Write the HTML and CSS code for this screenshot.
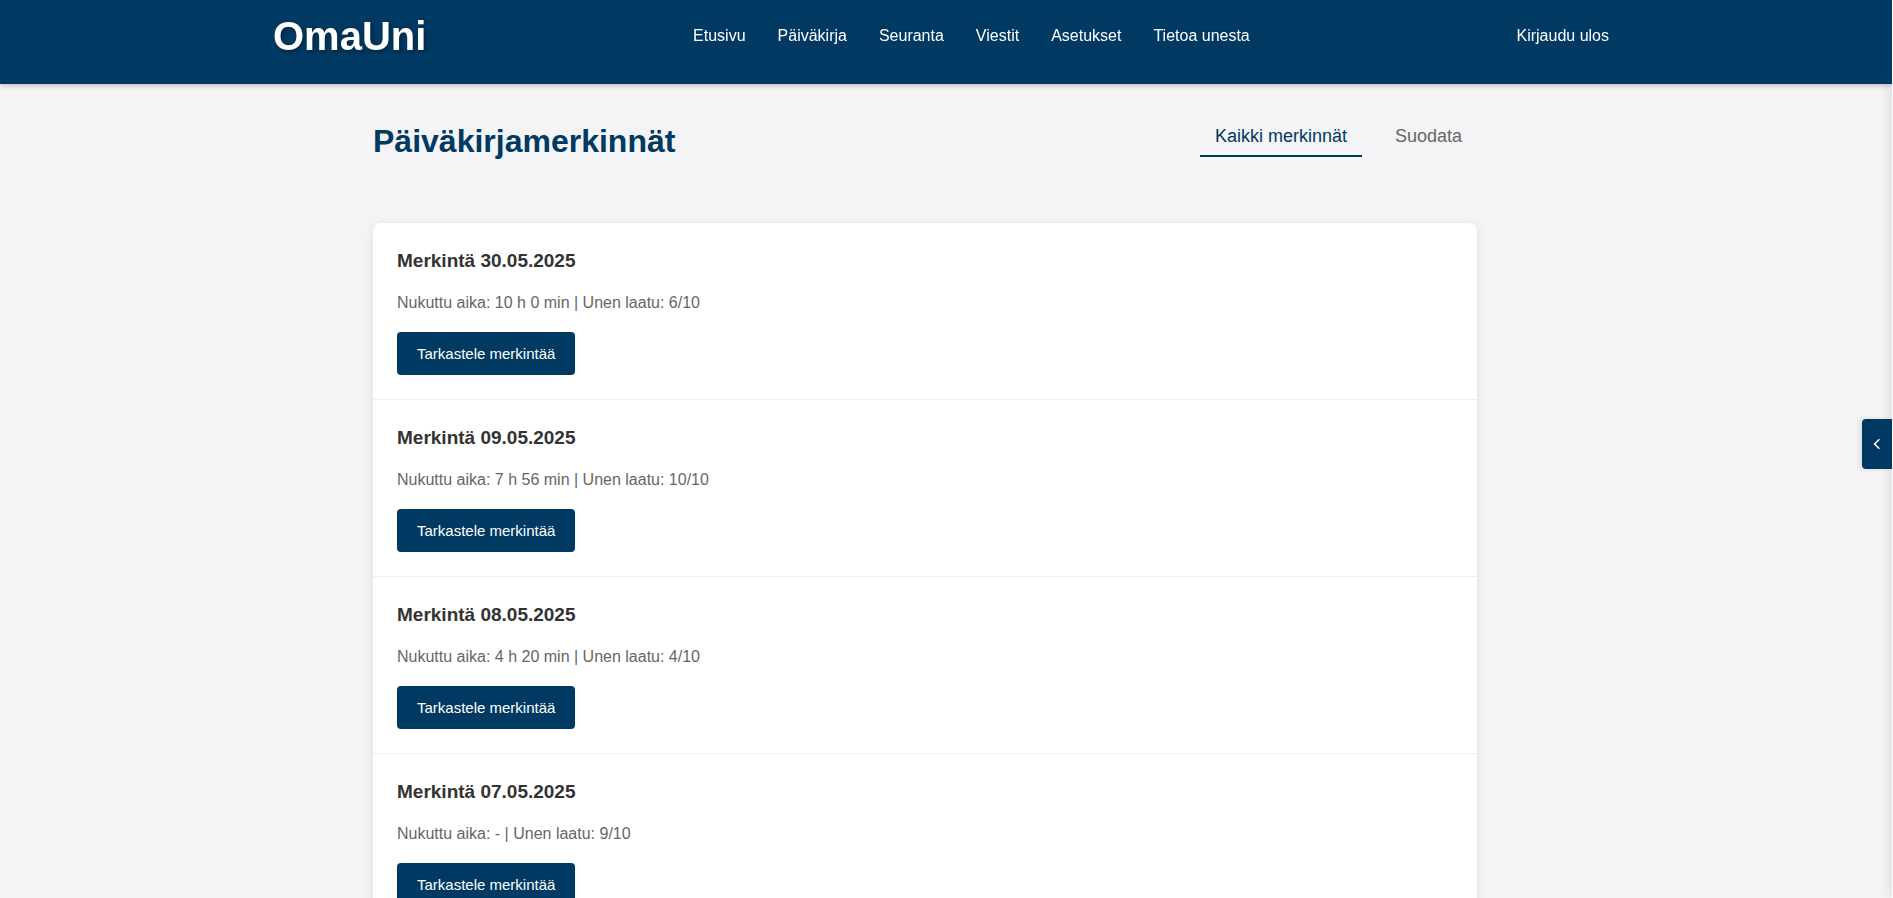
FILE: index.html
```
<!DOCTYPE html>
<html lang="fi">
<head>
<meta charset="utf-8">
<title>OmaUni – Päiväkirjamerkinnät</title>
<link rel="stylesheet" href="styles.css">
</head>
<body>
<header class="site-header">
  <div class="header-inner">
    <a class="logo" href="#">OmaUni</a>
    <nav class="main-nav" aria-label="Päävalikko">
      <a href="#">Etusivu</a>
      <a href="#">Päiväkirja</a>
      <a href="#">Seuranta</a>
      <a href="#">Viestit</a>
      <a href="#">Asetukset</a>
      <a href="#">Tietoa unesta</a>
    </nav>
    <a class="logout" href="#">Kirjaudu ulos</a>
  </div>
</header>
<main class="content">
  <div class="page-head">
    <h1>Päiväkirjamerkinnät</h1>
    <div class="tabs">
      <button class="tab active" type="button">Kaikki merkinnät</button>
      <button class="tab" type="button">Suodata</button>
    </div>
  </div>
  <section class="entries">
    <article class="entry">
      <h2>Merkintä 30.05.2025</h2>
      <p>Nukuttu aika: 10 h 0 min | Unen laatu: 6/10</p>
      <button class="view-btn" type="button">Tarkastele merkintää</button>
    </article>
    <article class="entry">
      <h2>Merkintä 09.05.2025</h2>
      <p>Nukuttu aika: 7 h 56 min | Unen laatu: 10/10</p>
      <button class="view-btn" type="button">Tarkastele merkintää</button>
    </article>
    <article class="entry">
      <h2>Merkintä 08.05.2025</h2>
      <p>Nukuttu aika: 4 h 20 min | Unen laatu: 4/10</p>
      <button class="view-btn" type="button">Tarkastele merkintää</button>
    </article>
    <article class="entry">
      <h2>Merkintä 07.05.2025</h2>
      <p>Nukuttu aika: - | Unen laatu: 9/10</p>
      <button class="view-btn" type="button">Tarkastele merkintää</button>
    </article>
  </section>
</main>
<aside class="side-panel">
  <button class="panel-toggle" type="button" aria-label="Avaa sivupaneeli">
    <svg width="8" height="12" viewBox="0 0 8 12" fill="none" stroke="currentColor" stroke-width="1.6"><path d="M6.4 1.2 1.6 6l4.8 4.8"/></svg>
  </button>
</aside>
</body>
</html>
```
FILE: styles.css
```
* { box-sizing: border-box; }
html { background: #f4f4f7; scrollbar-width: none; }
body {
  margin: 0;
  min-height: 100vh;
  border-right: 1px solid #fff;
  background: #f4f4f7;
  color: #333;
  font: 16px/26px "Liberation Sans", Arial, sans-serif;
}
a { color: inherit; text-decoration: none; }
button { font: inherit; border: 0; cursor: pointer; }

.site-header {
  position: relative;
  z-index: 3;
  padding: 16px 0 28px;
  background: #003961;
  color: #fff;
  box-shadow: 0 2px 5px rgba(0, 0, 0, 0.2);
}
.header-inner {
  display: flex;
  justify-content: space-between;
  align-items: center;
  max-width: 1346px;
  margin: 0 auto;
  padding-right: 10px;
}
.logo {
  font-size: 40px;
  line-height: 40px;
  font-weight: bold;
  text-shadow: 2px 2px 4px rgba(0, 0, 0, 0.3);
}
.main-nav { display: flex; gap: 32px; }

.content {
  max-width: 1146px;
  margin: 0 auto;
  padding: 32px 42px 32px 0;
}
.page-head {
  display: flex;
  justify-content: space-between;
  align-items: flex-start;
  margin-bottom: 56px;
}
h1 {
  margin: 0;
  color: #003961;
  font-size: 32px;
  line-height: 51px;
}
.tabs { display: flex; gap: 18px; }
.tab {
  padding: 9px 15px 7px;
  border-bottom: 2px solid transparent;
  background: none;
  color: #666;
  font-size: 18px;
  line-height: 23px;
}
.tab.active { color: #003961; border-bottom-color: #003961; }

.entries {
  overflow: hidden;
  border-radius: 8px;
  background: #fff;
  box-shadow: 0 2px 10px rgba(0, 0, 0, 0.1);
}
.entry { padding: 24px; border-bottom: 1px solid #eee; }
.entry h2 {
  margin: 0 0 15px;
  font-size: 19px;
  line-height: 28px;
}
.entry p { margin: 0 0 16px; color: #666; }
.view-btn {
  display: block;
  padding: 10px 20px;
  border-radius: 4px;
  background: #003961;
  color: #fff;
  font-size: 15px;
  line-height: 23px;
}

.side-panel {
  position: fixed;
  z-index: 2;
  top: 0;
  bottom: 0;
  left: calc(100% - 1px);
  width: 300px;
  background: #fff;
  box-shadow: -2px 0 10px rgba(0, 0, 0, 0.1);
}
.panel-toggle {
  position: absolute;
  top: calc(50% - 30px);
  left: -30px;
  display: grid;
  place-items: center;
  width: 30px;
  height: 50px;
  padding: 0;
  border-radius: 4px 0 0 4px;
  background: #003961;
  color: #fff;
  box-shadow: -2px 0 5px rgba(0, 0, 0, 0.1);
}
```
